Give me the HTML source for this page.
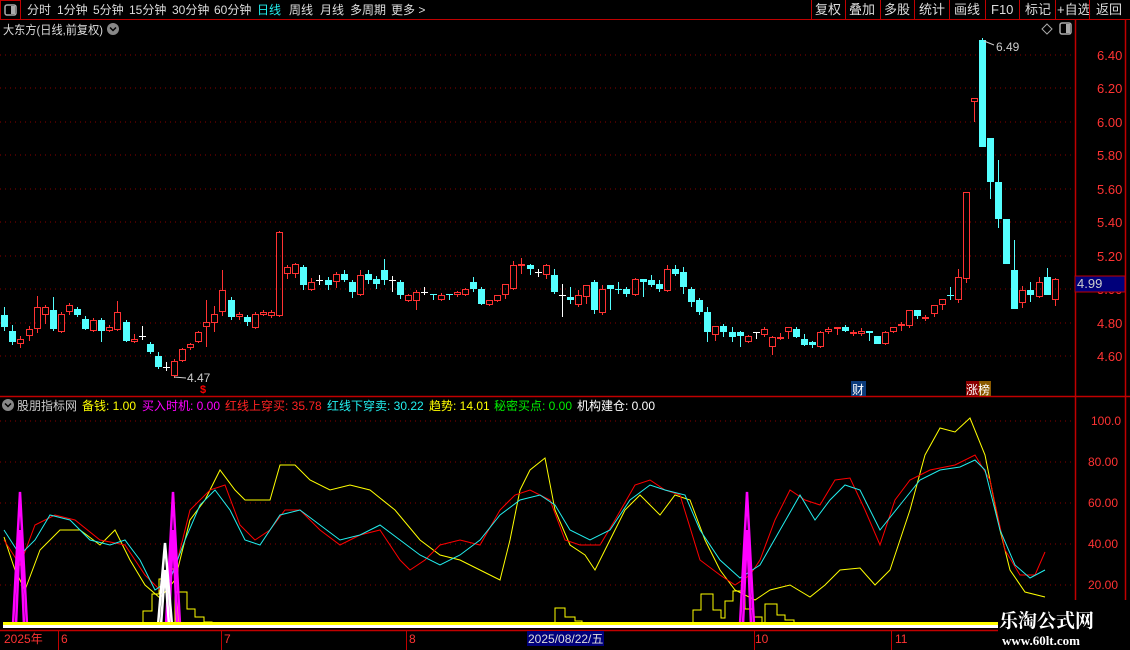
<!DOCTYPE html>
<html><head><meta charset="utf-8"><style>
html,body{margin:0;padding:0;background:#000;width:1130px;height:650px;overflow:hidden;font-family:"Liberation Sans","Noto Sans CJK SC",sans-serif}
svg{position:absolute;left:0;top:0}
</style></head><body>
<svg id="s" width="1130" height="650" xmlns="http://www.w3.org/2000/svg" font-family="Liberation Sans, Noto Sans CJK SC, sans-serif">
<rect width="1130" height="650" fill="#000"/>
<!-- toolbar -->
<line x1="0" y1="19.5" x2="1130" y2="19.5" stroke="#c00000"/>
<rect x="0.5" y="0.5" width="20" height="19" fill="none" stroke="#c00000"/>
<rect x="5" y="5" width="11" height="10" rx="2" fill="none" stroke="#aaa" stroke-width="1.5"/><rect x="11" y="6" width="4" height="8" fill="#aaa"/>
<g font-size="12" fill="#ddd">
<text x="27" y="14">分时</text><text x="57" y="14">1分钟</text><text x="93" y="14">5分钟</text><text x="129" y="14">15分钟</text><text x="172" y="14">30分钟</text><text x="214" y="14">60分钟</text>
<text x="257" y="14" fill="#2ee">日线</text><text x="289" y="14">周线</text><text x="320" y="14">月线</text><text x="350" y="14">多周期</text><text x="391" y="14">更多 &gt;</text>
</g>
<g font-size="13" fill="#ddd">
<text x="815" y="14">复权</text><text x="849" y="14">叠加</text><text x="884" y="14">多股</text><text x="919" y="14">统计</text><text x="954" y="14">画线</text><text x="991" y="14">F10</text><text x="1025" y="14">标记</text><text x="1057" y="14">+自选</text><text x="1096" y="14">返回</text>
</g>
<g stroke="#c00000"><line x1="811.5" y1="0" x2="811.5" y2="19"/><line x1="845.5" y1="0" x2="845.5" y2="19"/><line x1="880.5" y1="0" x2="880.5" y2="19"/><line x1="914.5" y1="0" x2="914.5" y2="19"/><line x1="949.5" y1="0" x2="949.5" y2="19"/><line x1="985.5" y1="0" x2="985.5" y2="19"/><line x1="1019.5" y1="0" x2="1019.5" y2="19"/><line x1="1055.5" y1="0" x2="1055.5" y2="19"/><line x1="1089.5" y1="0" x2="1089.5" y2="19"/></g>
<text x="3" y="34" font-size="12" fill="#ddd" textLength="100" lengthAdjust="spacingAndGlyphs">大东方(日线,前复权)</text>
<circle cx="113" cy="29" r="6" fill="#888"/><path d="M110 27.5 L113 30.5 L116 27.5" stroke="#000" stroke-width="1.5" fill="none"/>
<path d="M1047 24 L1052 29 L1047 34 L1042 29Z" fill="none" stroke="#aaa"/>
<rect x="1060" y="23" width="11" height="11" rx="2" fill="none" stroke="#aaa" stroke-width="1.5"/><rect x="1066" y="24" width="4" height="9" fill="#aaa"/>
<!-- axes -->
<line x1="1075.5" y1="20" x2="1075.5" y2="600" stroke="#c00000" stroke-width="1.5"/>
<line x1="1125.5" y1="20" x2="1125.5" y2="600" stroke="#c00000" stroke-width="1.5"/>
<line x1="0" y1="396.5" x2="1130" y2="396.5" stroke="#c00000" stroke-width="1.5"/>
<g id="grid" stroke="#8a0000" stroke-dasharray="1,4"></g>
<g font-size="13" fill="#f33" id="plabels"></g>
<rect x="1075" y="276" width="50" height="16" fill="#00007a" stroke="#c00000"/>
<text x="1077" y="288" font-size="13" fill="#ccc">4.99</text>
<g id="candles"></g>
<text x="996" y="51" font-size="12" fill="#ccc">6.49</text><path d="M984 41 L994 45" stroke="#ccc"/>
<text x="187" y="382" font-size="12" fill="#ccc">4.47</text><path d="M174 377 L186 378" stroke="#ccc"/>
<text x="200" y="393" font-size="11" fill="#f00" font-weight="bold">$</text>
<rect x="851" y="381" width="15" height="15" fill="#0a3a7a"/><text x="852" y="394" font-size="12" fill="#fff">财</text>
<rect x="966" y="381" width="13" height="15" fill="#8a0000"/><rect x="979" y="381" width="12" height="15" fill="#8a5a00"/><text x="966" y="394" font-size="12" fill="#fff">涨榜</text>
<!-- indicator -->
<circle cx="8" cy="405" r="6" fill="#888"/><path d="M5 403.5 L8 406.5 L11 403.5" stroke="#000" stroke-width="1.5" fill="none"/>
<g font-size="12">
<text x="17" y="410" fill="#ccc">股朋指标网</text>
<text x="82" y="410" fill="#ff0">备钱: 1.00</text>
<text x="142" y="410" fill="#f0f">买入时机: 0.00</text>
<text x="225" y="410" fill="#f22">红线上穿买: 35.78</text>
<text x="327" y="410" fill="#2ee">红线下穿卖: 30.22</text>
<text x="429" y="410" fill="#ff0">趋势: 14.01</text>
<text x="494" y="410" fill="#0e0">秘密买点: 0.00</text>
<text x="577" y="410" fill="#fff">机构建仓: 0.00</text>
</g>
<g font-size="12" fill="#f33"><text x="1091" y="425">100.0</text><text x="1088" y="466">80.00</text><text x="1088" y="507">60.00</text><text x="1088" y="548">40.00</text><text x="1088" y="589">20.00</text></g>
<g stroke="#8a0000" stroke-dasharray="1,4"><line x1="0" y1="421" x2="1075" y2="421"/><line x1="0" y1="462" x2="1075" y2="462"/><line x1="0" y1="503" x2="1075" y2="503"/><line x1="0" y1="544" x2="1075" y2="544"/><line x1="0" y1="585" x2="1075" y2="585"/></g>
<g fill="none" stroke="#ff0" stroke-width="1">
<path d="M143 624V611H152V594H159V579H168V569H178V624M175 624V592H187V609H195V617H204V622H212V624"/>
<path d="M555 624V608H565V617H575V621H582V624"/>
<path d="M693 624V610H701V594H713V610H721V618H725V601H733V591H745V609H753V617H762V624M765 624V604H777V615H785V620H794V623H803V624"/>
</g>
<polyline fill="none" stroke="#ff0" points="4,537 15,570 25,590 40,550 60,530 80,530 100,545 115,530 130,560 145,585 160,598 175,580 190,520 205,500 220,470 235,490 245,500 270,500 280,465 295,465 310,480 330,490 350,485 370,490 395,510 420,540 440,555 460,560 480,570 500,580 510,540 520,490 530,470 545,458 555,510 570,545 585,555 595,570 610,540 625,510 640,495 660,515 675,495 690,500 705,540 720,570 735,590 755,600 770,590 790,585 810,597 825,585 840,570 860,568 875,585 890,570 910,510 925,455 940,428 955,432 970,418 985,455 1000,530 1010,570 1025,592 1045,597"/>
<polyline fill="none" stroke="#f00" points="4,540 20,565 35,525 55,515 75,520 100,540 125,545 145,575 160,590 175,570 190,510 210,490 225,485 240,525 255,540 270,530 285,510 300,510 320,530 340,545 360,535 380,530 400,560 410,570 425,560 440,545 460,540 480,545 500,510 515,495 530,490 550,500 565,540 580,545 600,545 615,520 635,485 650,480 665,490 680,495 700,560 720,575 735,585 750,575 760,560 775,520 790,490 805,500 820,505 835,480 850,478 865,510 880,545 895,500 910,480 930,470 955,465 975,455 990,480 1005,550 1020,575 1035,575 1045,552"/>
<polyline fill="none" stroke="#2ee" points="4,530 20,555 35,540 50,515 70,520 90,540 110,545 125,540 140,560 155,590 170,580 185,540 200,505 215,490 230,510 245,540 260,545 280,515 300,510 320,525 340,540 360,535 380,525 400,540 420,555 440,565 460,555 480,540 500,515 520,500 540,495 555,505 570,530 590,540 610,530 630,500 650,485 665,490 685,495 700,530 720,560 740,578 760,565 780,530 800,495 815,520 830,500 845,485 860,490 880,530 900,505 920,480 940,470 960,467 975,460 985,470 1000,530 1015,565 1030,578 1045,570"/>
<g fill="none" stroke="#f0f" stroke-width="2.5"><path d="M13 625 L20 492 L27 625 M16 625 L20 530 L24 625"/><path d="M166 625 L173 492 L180 625 M169 625 L173 530 L177 625"/><path d="M740 625 L747 492 L754 625 M743 625 L747 530 L751 625"/></g>
<path d="M158 625 L165 543 L172 625 M161 625 L165 570 L169 625" fill="none" stroke="#fff" stroke-width="2.5"/>
<rect x="160" y="624" width="12" height="4" fill="#0c0"/>
<rect x="3" y="622" width="1002" height="3" fill="#ff0"/>
<rect x="3" y="625" width="1002" height="3" fill="#fff"/>
<!-- date axis -->
<line x1="0" y1="630.5" x2="998" y2="630.5" stroke="#c00000" stroke-width="1.5"/>
<g font-size="12" fill="#f33"><text x="4" y="643">2025年</text><text x="61" y="643">6</text><text x="224" y="643">7</text><text x="409" y="643">8</text><text x="755" y="643">10</text><text x="895" y="643">11</text></g>
<g stroke="#c00000"><line x1="58.5" y1="630" x2="58.5" y2="650"/><line x1="221.5" y1="630" x2="221.5" y2="650"/><line x1="406.5" y1="630" x2="406.5" y2="650"/><line x1="754.5" y1="630" x2="754.5" y2="650"/><line x1="891.5" y1="630" x2="891.5" y2="650"/></g>
<rect x="527" y="631" width="77" height="15" fill="#00007a"/>
<text x="528" y="643" font-size="12" fill="#ddd">2025/08/22/五</text>
<rect x="998" y="600" width="132" height="50" fill="#000"/>
<text x="999" y="627" font-size="19" font-weight="bold" fill="#fff" font-family="Liberation Serif, Noto Serif CJK SC, serif">乐淘公式网</text>
<text x="1002" y="645" font-size="13" font-weight="bold" fill="#fff" font-family="Liberation Serif, serif">www.60lt.com</text>
</svg>
<script>
var NS="http://www.w3.org/2000/svg",s=document.getElementById('s');
function el(p,t,a,txt){var e=document.createElementNS(NS,t);for(var k in a)e.setAttribute(k,a[k]);if(txt)e.textContent=txt;p.appendChild(e);return e;}
var g=document.getElementById('grid'),pl=document.getElementById('plabels');
var lv=[[6.40,55],[6.20,88],[6.00,122],[5.80,155],[5.60,189],[5.40,222],[5.20,256],[5.00,289],[4.80,323],[4.60,356]];
lv.forEach(function(l){el(g,'line',{x1:0,y1:l[1],x2:1075,y2:l[1]});el(pl,'text',{x:1097,y:l[1]+5},l[0].toFixed(2));});
var d="c315,327,307,331;c331,342,325,345;r339,344,336,348;r329,336,326,341;r307,329,296,333;r307,315,305,324;c310,329,297,331;r314,332,312,333;r305,312,303,315;c309,315,307,317;c319,329,316,330;r320,331,318,332;c320,331,318,342;r327,331,325,332;r312,330,301,331;c322,341,320,342;r339,342,334,343;w336,336,326,340;c344,352,342,354;c356,367,352,369;w367,367,362,371;r361,376,359,378;r349,361,348,362;r344,348,343,350;r332,342,331,343;r322,327,300,347;r314,323,306,332;r290,312,270,316;c300,317,297,320;r314,317,312,320;c317,322,315,326;r314,328,312,329;r312,315,310,316;r312,316,310,318;r232,316,231,317;r267,274,265,279;r264,274,263,278;c267,285,265,290;r282,290,278,291;w280,280,275,285;c280,285,277,290;r274,282,272,288;c274,280,270,282;c282,292,280,298;r275,295,270,296;c274,280,270,284;c279,284,276,289;c270,280,259,285;w280,280,276,292;c282,295,280,299;r295,301,294,302;r292,301,290,310;w292,292,287,295;c294,294,294,300;r295,300,293,301;c294,294,294,300;r292,295,291,297;r289,295,288,296;c282,289,277,292;c289,304,287,305;r300,305,300,306;r295,301,295,302;r284,295,284,299;r265,289,261,290;r264,264,258,274;c265,269,264,275;w272,272,269,277;r265,275,264,279;c275,292,269,294;w295,295,284,317;c297,300,287,304;r295,305,290,307;r285,297,285,304;c282,310,280,314;r289,313,285,315;c285,289,285,310;c289,289,282,294;c289,294,287,297;r279,295,278,296;c279,282,279,297;c280,285,275,287;c284,289,280,292;r269,291,265,292;c269,274,265,276;c272,287,267,294;c289,302,287,307;c300,312,298,315;c312,332,307,342;r326,335,326,341;c326,332,324,337;c332,337,327,342;c332,336,331,347;r336,342,335,343;w332,332,332,339;r329,335,327,337;r337,347,336,355;r337,337,333,340;r327,332,327,339;c329,337,327,338;c339,345,334,346;c342,345,341,348;r332,347,331,348;r329,332,327,334;r327,329,327,335;c327,331,325,332;r332,334,330,336;r331,334,328,336;c331,333,331,341;c336,344,336,344;r332,344,331,345;r327,332,327,333;r324,326,322,331;r310,326,310,328;c310,316,310,319;r317,319,315,321;r305,314,305,317;r299,305,299,310;c295,295,287,300;r277,300,269,303;r192,279,192,283;r98,102,98,122;c40,147,38,147;c138,182,138,199;c182,219,160,228;c219,264,219,264;c270,309,240,309;r290,303,286,308;c290,295,282,302;r282,297,277,298;c277,295,268,295;r279,300,278,306";
var cg=document.getElementById('candles'),arr=d.split(';');
arr.forEach(function(it,i){var t=it[0],v=it.slice(1).split(',').map(Number);var x=Math.round(4.3+i*8.08);
var col=t=='r'?'#ff3232':(t=='c'?'#54ffff':'#fff');
var top=v[0],bot=v[1];if(bot-top<1)bot=top+1;
el(cg,'line',{x1:x+0.5,y1:v[2],x2:x+0.5,y2:top,stroke:col});
el(cg,'line',{x1:x+0.5,y1:bot,x2:x+0.5,y2:v[3],stroke:col});
if(t=='r')el(cg,'rect',{x:x-2.5,y:top+0.5,width:6,height:Math.max(bot-top-1,1),fill:'none',stroke:col});
else if(t=='c')el(cg,'rect',{x:x-3,y:top,width:7,height:Math.max(bot-top,1),fill:col});
else el(cg,'line',{x1:x-3,y1:top+0.5,x2:x+4,y2:top+0.5,stroke:col});
});
</script>
</body></html>
